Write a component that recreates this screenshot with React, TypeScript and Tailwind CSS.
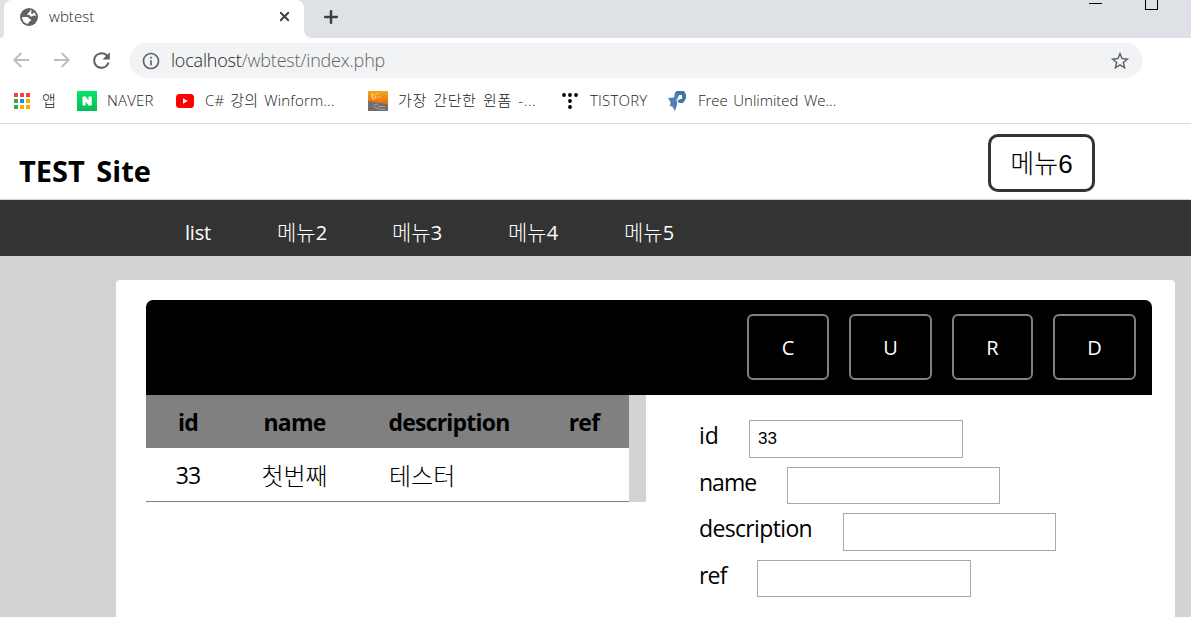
import { useState } from 'react';
import { Plus, X } from 'lucide-react';
import { MdInfoOutline, MdRefresh, MdStarBorder } from 'react-icons/md';

const menus = [
  { label: 'list', cls: 'w-[92px] tracking-[-0.2px]' },
  { label: '메뉴', num: '2', cls: 'w-[115px]' },
  { label: '메뉴', num: '3', cls: 'w-[116px]' },
  { label: '메뉴', num: '4', cls: 'w-[116px]' },
  { label: '메뉴', num: '5', cls: 'w-[116px]' },
];

const actions = [
  { label: 'C', cls: 'w-[82px]' },
  { label: 'U', cls: 'w-[83px]' },
  { label: 'R', cls: 'w-[81px]' },
  { label: 'D', cls: 'w-[83px]' },
];

const fields = [
  { name: 'id', label: 'w-[50px]', input: 'w-[214px] h-[38px]', row: 'h-[47px]' },
  { name: 'name', label: 'w-[88px] tracking-[-1px]', input: 'w-[213px] h-[37px]', row: 'h-[46px]' },
  { name: 'description', label: 'w-[144px] tracking-[-0.65px]', input: 'w-[213px] h-[38px]', row: 'h-[47px]' },
  { name: 'ref', label: 'w-[58px] tracking-[-0.8px]', input: 'w-[214px] h-[37px]', row: 'h-[47px]' },
];

const appColors = [
  'bg-[#f44336]', 'bg-[#f44336]', 'bg-[#f44336]',
  'bg-[#34a853]', 'bg-[#1e88e5]', 'bg-[#f9ab00]',
  'bg-[#34a853]', 'bg-[#f9ab00]', 'bg-[#f9ab00]',
];

function GlobeIcon() {
  return (
    <svg width="18" height="18" viewBox="0 0 18 18" className="ml-[16px] mt-[1px] shrink-0">
      <circle cx="9" cy="9" r="9" fill="#5f6368" />
      <path d="M9.500 2C10.500 3 10 4 8.700 4.300 8.500 5.700 7.200 5.800 6.800 6.700 8.800 6.500 10.200 7 10.500 8.500c1.500.2 2.300-.9 3.500-1 .9-.1 1.500.6 2 1.200a7 7 0 0 0-1.600-4.200L12.200 6 10.800 5l1-2.400A7 7 0 0 0 9.500 2z" fill="#fff" />
      <path d="M2 9h5.500c1.500.3 1.200 1.800 2.700 2 1.300.3 1 1.700 0 2.100-.9.4-.8 1.500-1.900 1.700L8 16a7 7 0 0 1-6-7z" fill="#fff" />
    </svg>
  );
}

function ArrowIcon({ className }: { className: string }) {
  return (
    <svg width="16" height="16" viewBox="0 0 16 16" fill="none" stroke="#babcbe" strokeWidth="1.9" className={className}>
      <path d="M16 8H1.500M8.300 1 1.300 8l7 7" />
    </svg>
  );
}

function NaverIcon() {
  return (
    <svg width="20" height="20" viewBox="0 0 20 20">
      <defs>
        <linearGradient id="naver" x1="0" y1="0" x2="0" y2="1">
          <stop offset="0" stopColor="#00e868" />
          <stop offset="1" stopColor="#08b95c" />
        </linearGradient>
      </defs>
      <rect width="20" height="20" fill="url(#naver)" />
      <path d="M5.500 5.500h3.200l2.800 4v-4h3.200v9h-3.200l-2.800-4v4H5.500z" fill="#fff" />
    </svg>
  );
}

function YoutubeIcon() {
  return (
    <svg width="18" height="14" viewBox="0 0 18 14">
      <rect width="18" height="14" rx="3.5" fill="#f00" />
      <path d="M7 4.200v5.600L11.800 7z" fill="#fff" />
    </svg>
  );
}

function WinformIcon() {
  return (
    <svg width="20" height="20" viewBox="0 0 20 20">
      <defs>
        <linearGradient id="orange" x1="0" y1="0" x2="0" y2="1">
          <stop offset="0" stopColor="#f9a51b" />
          <stop offset="1" stopColor="#ee6c0c" />
        </linearGradient>
      </defs>
      <rect width="20" height="20" fill="#6f6f6f" />
      <path d="M0 0h20v13L0 10z" fill="url(#orange)" />
      <g fill="none" stroke="#fde0b8">
        <path d="M3 3.500c1.500-1 3 0 1.800 1.500S4 8 6 8s2.500-3 .5-3.200" />
        <path d="M7 3.500l4-1M9 6h4" strokeWidth=".6" />
      </g>
      <path d="M10 13c-5 .5-6 2.500-2 4s6 1.500 9 1.500M10 15.500h7" fill="none" stroke="#a5a5a5" strokeWidth=".9" />
    </svg>
  );
}

function TistoryIcon() {
  return (
    <svg width="16" height="16" viewBox="0 0 16 16" fill="#000">
      <circle cx="2" cy="2" r="1.900" />
      <circle cx="8" cy="2" r="1.900" />
      <circle cx="14" cy="2" r="1.900" />
      <circle cx="8" cy="8" r="1.900" />
      <circle cx="8" cy="14" r="1.900" />
    </svg>
  );
}

function HostingIcon() {
  return (
    <svg width="18" height="20" viewBox="0 0 18 20">
      <path d="M7 1.500 9 0h7l2 3.500v4L15 12h-4l-1.500-2L12 8h2V4h-3L9 9z" fill="#4774a9" />
      <path d="M7 1.500 11 3l-2 7v4l-2 6-3-5-2 .5.500-4.500L0 7l6-.5z" fill="#4f7fb4" />
      <path d="M8 10l3-5" stroke="#b5cde3" />
    </svg>
  );
}

function Browser() {
  return (
    <div className="shrink-0 bg-white">
      {/* tab strip */}
      <div className="flex h-[38px] bg-[#dee1e6]">
        <div className="w-1 shrink-0 bg-white">
          <div className="h-full rounded-br-lg bg-[#dee1e6]" />
        </div>
        <div className="flex w-[300px] shrink-0 items-start rounded-t-lg bg-white pt-[7px]">
          <GlobeIcon />
          <span className="-mt-px ml-[11px] w-[228px] text-[15px] leading-5 font-light tracking-[0.05px] text-[#202124]">wbtest</span>
          <X size={15} strokeWidth={3} className="mt-[2px] -mr-3 shrink-0 text-[#3c4043]" />
        </div>
        <div className="w-[887px] shrink-0 bg-white">
          <div className="flex h-full rounded-bl-lg bg-[#dee1e6]">
            <Plus size={20} strokeWidth={3} className="ml-[17px] mt-[7px] text-[#3c4043]" />
            <div className="ml-[748px] mt-[3px] h-px w-[13px] bg-black" />
            <div className="ml-[43px] h-[10px] w-[13px] border border-t-0 border-black" />
          </div>
        </div>
      </div>

      {/* toolbar */}
      <div className="flex h-[45px] pt-[5px] text-[#5f6368]">
        <ArrowIcon className="ml-[13px] mt-[9px]" />
        <ArrowIcon className="ml-[25px] mt-[9px] rotate-180" />
        <MdRefresh size={25} className="ml-[19px] mt-[5px]" />
        <div className="ml-[15px] flex h-[35px] w-[1014px] items-center rounded-full bg-[#f1f3f4]">
          <MdInfoOutline size={20} className="ml-[12px]" />
          <span className="-mt-px ml-[10px] flex-1 text-[18px] leading-6 font-light tracking-[-0.2px] text-[#5f6368]">
            <span className="text-[#202124]">localhost</span>/wbtest/index.php
          </span>
          <MdStarBorder size={22} className="mr-[12px]" />
        </div>
      </div>

      {/* bookmarks bar */}
      <div className="flex h-[41px] items-center border-b border-[#dadce0] pb-[5px] text-[15px] leading-5 font-light whitespace-nowrap text-[#202124]">
        <div className="ml-[14px] grid w-[16px] grid-cols-3 gap-[2px]">
          {appColors.map((c, i) => <i key={i} className={`size-1 ${c}`} />)}
        </div>
        <span className="-mt-[2px] ml-[12px] w-[35px]">앱</span>
        <NaverIcon />
        <span className="-mt-px ml-[10px] w-[69px] tracking-[0.2px]">NAVER</span>
        <YoutubeIcon />
        <span className="-mt-px ml-[11px] w-[163px] tracking-[0.15px] [word-spacing:2px]">C# 강의 Winform...</span>
        <WinformIcon />
        <span className="-mt-px ml-[10px] w-[164px] tracking-[0.6px] [word-spacing:2px]">가장 간단한 윈폼 -...</span>
        <TistoryIcon />
        <span className="-mt-px ml-[12px] w-[78px] tracking-[0.2px]">TISTORY</span>
        <HostingIcon />
        <span className="-mt-px ml-[12px] [word-spacing:1.5px]">Free Unlimited We...</span>
      </div>
    </div>
  );
}

export default function App() {
  const [values, setValues] = useState<Record<string, string>>({ id: '33', name: '', description: '', ref: '' });

  return (
    <div className="flex h-screen w-[1191px] flex-col overflow-hidden bg-[#d3d3d3] font-['Open_Sans','Noto_Sans_CJK_KR',sans-serif] text-black">
      <Browser />

      <header className="flex h-[76px] shrink-0 items-start justify-between border-b border-[#d3d3d3] bg-white">
        <h1 className="ml-[19px] mt-[27px] text-[29px] leading-10 font-bold [word-spacing:4px]">TEST Site</h1>
        <button className="mr-[96px] mt-[10px] h-[58px] w-[107px] rounded-[10px] border-3 border-[#333] pt-[3px] font-['Liberation_Sans','Noto_Sans_CJK_KR',sans-serif] text-[26px] font-light">
          메뉴6
        </button>
      </header>

      <nav className="flex h-[56px] shrink-0 items-center bg-[#333] pt-[9px] pl-[185px] text-[20px] text-white">
        {menus.map((m) => (
          <a key={m.label + m.num} className={m.cls}>
            {m.num ? <span className="text-[21px] font-light">{m.label}</span> : m.label}
            {m.num}
          </a>
        ))}
      </nav>

      <main className="mt-[24px] ml-[116px] w-[1059px] flex-1 rounded-t-[4px] bg-white pt-[20px] pl-[30px]">
        <div className="flex h-[95px] w-[1006px] justify-end gap-[20px] rounded-t-[7px] bg-black pt-[14px] pr-[16px]">
          {actions.map((a) => (
            <button key={a.label} className={`h-[66px] rounded-[6px] border-2 border-[#808080] pt-[2px] text-[20px] text-white ${a.cls}`}>
              {a.label}
            </button>
          ))}
        </div>

        <div className="flex items-start">
          <div className="h-[107px] w-[500px] shrink-0 bg-[#d3d3d3]">
            <table className="w-[483px] table-fixed border-separate border-spacing-0 text-[23px]">
              <thead>
                <tr className="h-[53px] bg-[#808080] leading-[51px] tracking-[-0.8px]">
                  <th className="w-[84px] p-0 pt-[2px]">id</th>
                  <th className="w-[129px] p-0 pt-[2px]">name</th>
                  <th className="w-[180px] p-0 pt-[2px]">description</th>
                  <th className="w-[90px] p-0 pt-[2px]">ref</th>
                </tr>
              </thead>
              <tbody>
                <tr className="h-[54px] bg-white leading-[51px] *:border-b *:border-[#808080] *:pt-[2px]">
                  <td className="text-center tracking-[-0.8px]">33</td>
                  <td className="text-center text-[24px] font-light">첫번째</td>
                  <td className="pl-[30px] text-[24px] font-light">테스터</td>
                  <td />
                </tr>
              </tbody>
            </table>
          </div>

          <form className="ml-[53px] pt-[25px]">
            {fields.map((f) => (
              <div key={f.name} className={`flex items-start ${f.row}`}>
                <label className={`-mt-px shrink-0 text-[23px] leading-[32px] ${f.label}`}>{f.name}</label>
                <input
                  value={values[f.name]}
                  onChange={(e) => setValues({ ...values, [f.name]: e.target.value })}
                  className={`border border-[#a9a9a9] px-[8px] font-['Liberation_Sans',sans-serif] text-[17px] ${f.input}`}
                />
              </div>
            ))}
          </form>
        </div>
      </main>
    </div>
  );
}
